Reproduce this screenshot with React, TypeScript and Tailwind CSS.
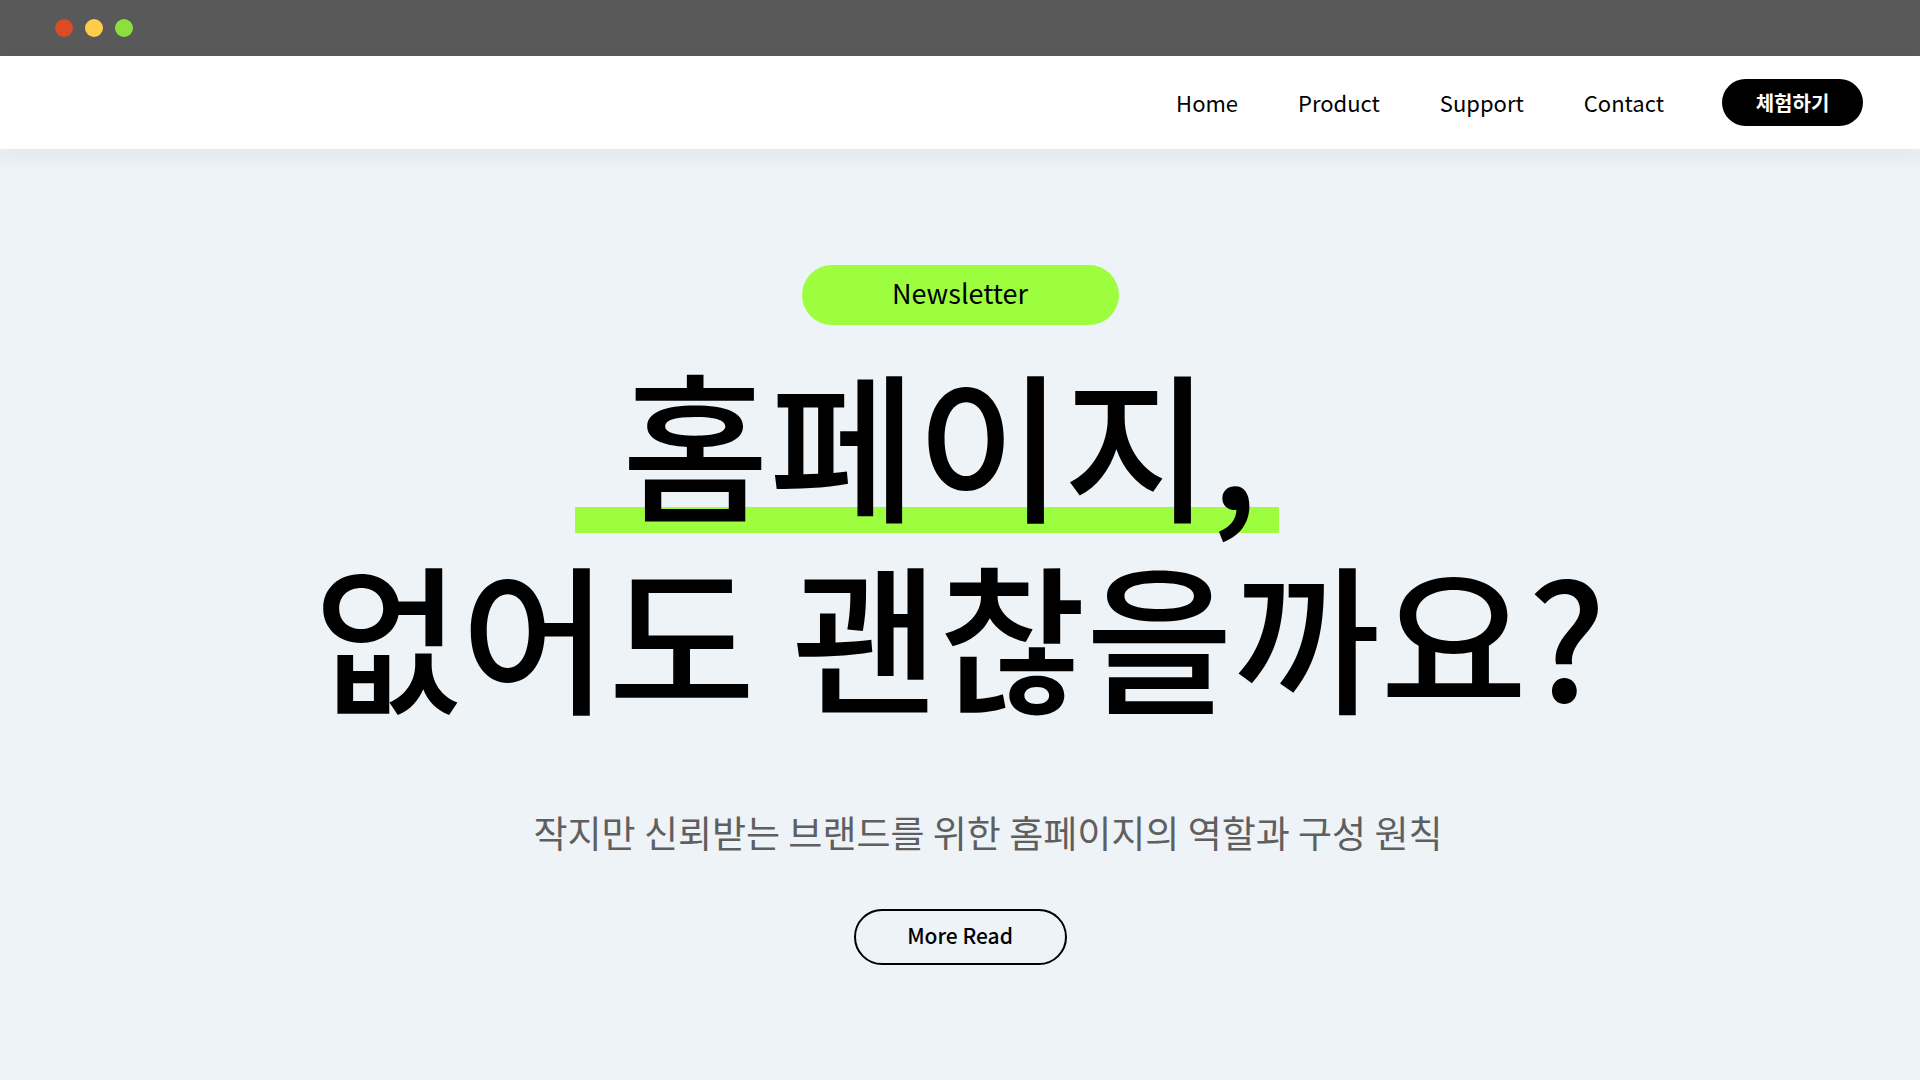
const NAV_ITEMS = ['Home', 'Product', 'Support', 'Contact'];

const WINDOW_DOTS = ['bg-[#dc4a26]', 'bg-[#ffcd4a]', 'bg-[#8be03c]'];

export default function App() {
  return (
    <div className="flex min-h-screen flex-col bg-[#edf3f7] font-['Noto_Sans_CJK_KR',sans-serif] text-black">
      <div className="flex h-14 shrink-0 items-center gap-3 bg-[#595959] px-[55px]">
        {WINDOW_DOTS.map((dot) => (
          <span key={dot} className={`size-[18px] rounded-full ${dot}`} />
        ))}
      </div>

      <header className="flex h-[93px] shrink-0 items-center justify-end bg-white pr-[57px] shadow-[0_8px_16px_4px_rgba(0,0,0,0.04)]">
        <nav className="flex gap-[60px] pb-0.5 text-[22px] leading-8">
          {NAV_ITEMS.map((item) => (
            <a key={item} href={`#${item.toLowerCase()}`}>
              {item}
            </a>
          ))}
        </nav>
        <button type="button" className="ml-[58px] h-[47px] w-[141px] rounded-full bg-black text-[20px] font-bold leading-8 text-white">
          체험하기
        </button>
      </header>

      <main className="flex flex-col items-center pt-[116px]">
        <p className="flex h-[60px] w-[317px] items-center justify-center rounded-full bg-[#9dfe3f] pb-1 text-[27px]">
          Newsletter
        </p>

        <h1 className="mt-[19px] flex flex-col items-center text-[160px] font-medium leading-[192px]">
          {/* 형광펜 밑줄 */}
          <span className="mr-[66px] bg-[linear-gradient(transparent_163px,#9dfe3f_163px,#9dfe3f_189px,transparent_189px)] pr-[21px] pl-[47px]">
            홈페이지,
          </span>
          <span>없어도 괜찮을까요?</span>
        </h1>

        <p className="mt-[77px] ml-14 text-[37px] leading-[54px] text-[#5f5f5f]">
          작지만 신뢰받는 브랜드를 위한 홈페이지의 역할과 구성 원칙
        </p>

        <button type="button" className="mt-[50px] h-14 w-[213px] rounded-full border-2 border-black pb-0.5 text-[21px] font-medium">
          More Read
        </button>
      </main>
    </div>
  );
}
